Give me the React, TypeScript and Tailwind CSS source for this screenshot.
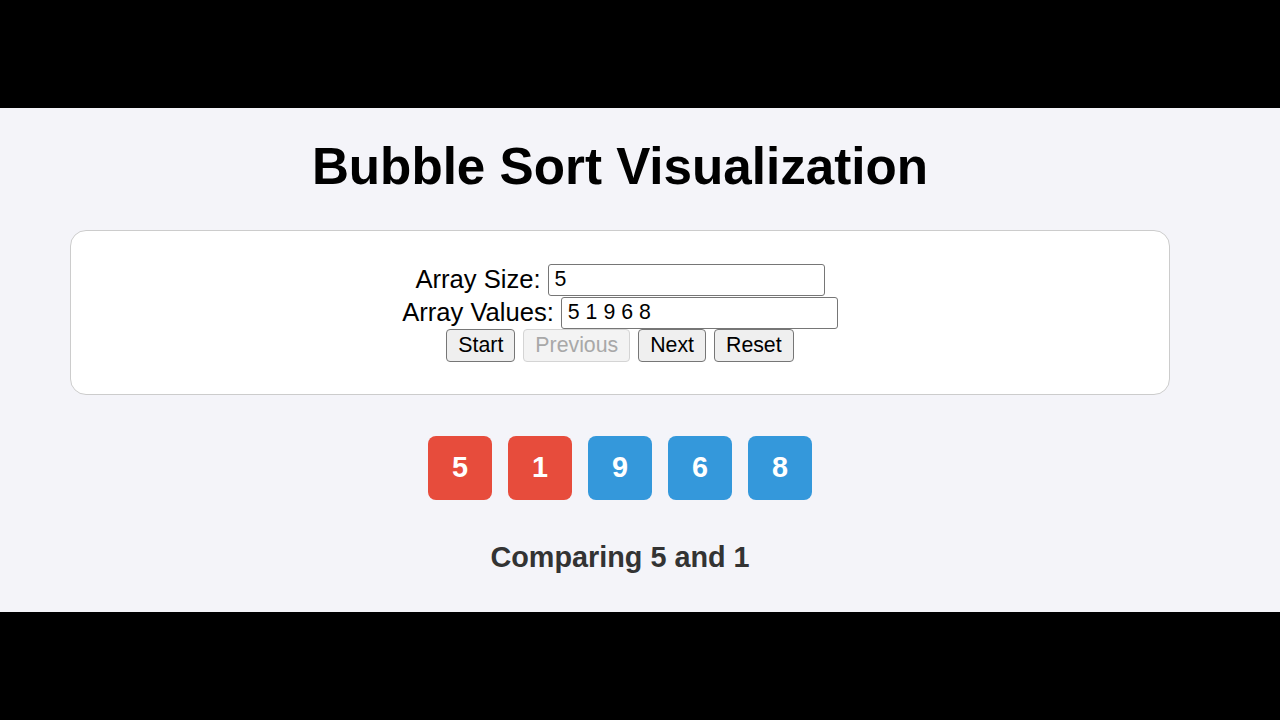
import React from "react";

const font = { fontFamily: '"Liberation Sans", Arial, sans-serif' };

function Btn({ children, disabled }: { children: React.ReactNode; disabled?: boolean }) {
  return (
    <button
      disabled={disabled}
      className={
        disabled
          ? "h-[33px] px-[11px] text-[21.3px] leading-none rounded-[4px] border border-[#d4d4d4] bg-[#f3f3f3] text-[#a8a8a8]"
          : "h-[33px] px-[11px] text-[21.3px] leading-none rounded-[4px] border border-[#767676] bg-[#efefef] text-black"
      }
      style={font}
    >
      {children}
    </button>
  );
}

export default function App() {
  const values = [5, 1, 9, 6, 8];
  return (
    <div className="w-[1280px] h-[720px] bg-black flex flex-col" style={font}>
      <div className="h-[108px] bg-black" />
      <div className="h-[504px] bg-[#f4f4f9] w-full">
        <div className="w-[1240px] flex flex-col items-center">
          <h1 className="mt-[29px] text-[51.2px] leading-[59px] font-bold text-black">
            Bubble Sort Visualization
          </h1>
          <div className="mt-[34px] w-[1100px] h-[165px] bg-white border border-[#cccccc] rounded-[16px] py-[32px] flex flex-col items-center">
            <div className="h-[33px] flex items-center gap-[7px]">
              <span className="text-[25.6px] text-black">Array Size:</span>
              <div className="w-[277px] h-[32px] border border-[#767676] rounded-[3px] bg-white px-[6px] flex items-center text-[21.3px] text-black">
                5
              </div>
            </div>
            <div className="h-[33px] flex items-center gap-[7px]">
              <span className="text-[25.6px] text-black">Array Values:</span>
              <div className="w-[277px] h-[32px] border border-[#767676] rounded-[3px] bg-white px-[6px] flex items-center text-[21.3px] text-black">
                5 1 9 6 8
              </div>
            </div>
            <div className="h-[33px] flex items-center gap-[8px]">
              <Btn>Start</Btn>
              <Btn disabled>Previous</Btn>
              <Btn>Next</Btn>
              <Btn>Reset</Btn>
            </div>
          </div>
          <div className="mt-[41px] flex gap-[16px]">
            {values.map((v, i) => (
              <div
                key={i}
                className={
                  i < 2
                    ? "w-[64px] h-[64px] rounded-[8px] bg-[#e74c3c] text-white font-bold text-[28.8px] flex items-center justify-center"
                    : "w-[64px] h-[64px] rounded-[8px] bg-[#3498db] text-white font-bold text-[28.8px] flex items-center justify-center"
                }
              >
                {v}
              </div>
            ))}
          </div>
          <div className="mt-[41px] text-[28.8px] leading-[33px] font-bold text-[#333333]">
            Comparing 5 and 1
          </div>
        </div>
      </div>
      <div className="h-[108px] bg-black" />
    </div>
  );
}
